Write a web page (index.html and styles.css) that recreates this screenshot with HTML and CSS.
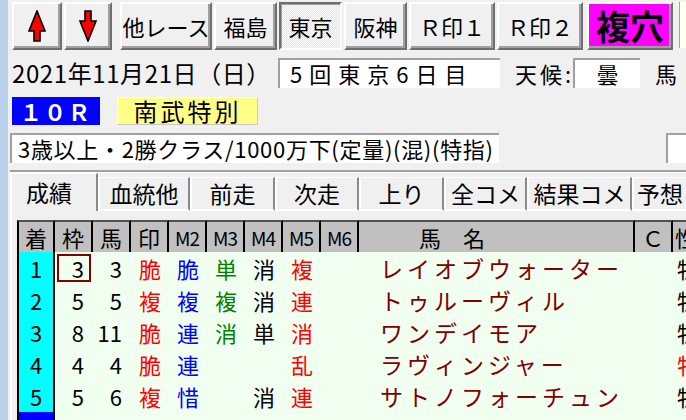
FILE: index.html
```html
<!DOCTYPE html>
<html lang="ja">
<head>
    <meta charset="UTF-8">
    <link rel="stylesheet" href="styles.css">
</head>
<body>
<div class="frame">
    <div class="frame-edge"></div>
    <div class="window">
        <div class="toolbar">
            <button class="btn btn-up">
                <svg width="18" height="32" viewBox="0 0 18 32"><polygon points="9,1 17,21 12,21 12,31 6,31 6,21 1,21" fill="#f00" stroke="#000" stroke-width="1.6"/></svg>
            </button>
            <button class="btn btn-down">
                <svg width="18" height="32" viewBox="0 0 18 32"><polygon points="6,1 12,1 12,11 17,11 9,31 1,11 6,11" fill="#f00" stroke="#000" stroke-width="1.6"/></svg>
            </button>
            <button class="btn btn-other">他レース</button>
            <button class="btn btn-course">福島</button>
            <button class="btn btn-course pressed">東京</button>
            <button class="btn btn-course">阪神</button>
            <button class="btn btn-mark">Ｒ印１</button>
            <button class="btn btn-mark">Ｒ印２</button>
            <button class="btn btn-fukuana">複穴</button>
            <div class="memo"></div>
        </div>

        <div class="race-date">
            <span class="date">2021年11月21日（日）</span>
            <span class="field field-kaisai">5回東京6日目</span>
            <span class="label label-weather">天候:</span>
            <span class="field field-weather">曇</span>
            <span class="label label-baba">馬</span>
        </div>

        <div class="race-title">
            <span class="race-no">１０Ｒ</span>
            <span class="race-name">南武特別</span>
        </div>

        <div class="race-cond">
            <span class="field field-cond">3歳以上・2勝クラス/1000万下(定量)(混)(特指)</span>
            <span class="field field-side"></span>
        </div>

        <div class="rule"></div>

        <div class="tabs">
            <div class="tab active tab-seiseki">成績</div>
            <div class="tab tab-kettou">血統他</div>
            <div class="tab tab-zenso">前走</div>
            <div class="tab tab-jiso">次走</div>
            <div class="tab tab-agari">上り</div>
            <div class="tab tab-zencome">全コメ</div>
            <div class="tab tab-kekka">結果コメ</div>
            <div class="tab tab-yoso">予想</div>
        </div>

        <div class="panel">
            <table class="grid">
                <thead>
                <tr>
                    <th class="c-rank">着</th>
                    <th class="c-num">枠</th>
                    <th class="c-num">馬</th>
                    <th class="c-num">印</th>
                    <th class="c-num m">M2</th>
                    <th class="c-num m">M3</th>
                    <th class="c-num m">M4</th>
                    <th class="c-num m">M5</th>
                    <th class="c-num m">M6</th>
                    <th class="c-name">馬　名</th>
                    <th class="c-num">Ｃ</th>
                    <th class="c-sex">性</th>
                </tr>
                </thead>
                <tbody>
                <tr>
                    <td class="rank">1</td>
                    <td class="num focus">3</td>
                    <td class="num">3</td>
                    <td class="mk red">脆</td>
                    <td class="mk blue">脆</td>
                    <td class="mk green">単</td>
                    <td class="mk">消</td>
                    <td class="mk red">複</td>
                    <td class="mk"></td>
                    <td class="name">レイオブウォーター</td>
                    <td class="mk"></td>
                    <td class="sex">牡</td>
                </tr>
                <tr>
                    <td class="rank">2</td>
                    <td class="num">5</td>
                    <td class="num">5</td>
                    <td class="mk red">複</td>
                    <td class="mk blue">複</td>
                    <td class="mk green">複</td>
                    <td class="mk">消</td>
                    <td class="mk red">連</td>
                    <td class="mk"></td>
                    <td class="name">トゥルーヴィル</td>
                    <td class="mk"></td>
                    <td class="sex">牡</td>
                </tr>
                <tr>
                    <td class="rank">3</td>
                    <td class="num">8</td>
                    <td class="num">11</td>
                    <td class="mk red">脆</td>
                    <td class="mk blue">連</td>
                    <td class="mk green">消</td>
                    <td class="mk">単</td>
                    <td class="mk red">消</td>
                    <td class="mk"></td>
                    <td class="name">ワンデイモア</td>
                    <td class="mk"></td>
                    <td class="sex">牡</td>
                </tr>
                <tr>
                    <td class="rank">4</td>
                    <td class="num">4</td>
                    <td class="num">4</td>
                    <td class="mk red">脆</td>
                    <td class="mk blue">連</td>
                    <td class="mk"></td>
                    <td class="mk"></td>
                    <td class="mk red">乱</td>
                    <td class="mk"></td>
                    <td class="name">ラヴィンジャー</td>
                    <td class="mk"></td>
                    <td class="sex red">牝</td>
                </tr>
                <tr>
                    <td class="rank">5</td>
                    <td class="num">5</td>
                    <td class="num">6</td>
                    <td class="mk red">複</td>
                    <td class="mk blue">惜</td>
                    <td class="mk"></td>
                    <td class="mk">消</td>
                    <td class="mk red">連</td>
                    <td class="mk"></td>
                    <td class="name">サトノフォーチュン</td>
                    <td class="mk"></td>
                    <td class="sex">牡</td>
                </tr>
                <tr>
                    <td class="rank rank-sel"></td>
                    <td class="num"></td>
                    <td class="num"></td>
                    <td class="mk"></td>
                    <td class="mk"></td>
                    <td class="mk"></td>
                    <td class="mk"></td>
                    <td class="mk"></td>
                    <td class="mk"></td>
                    <td class="name"></td>
                    <td class="mk"></td>
                    <td class="sex"></td>
                </tr>
                </tbody>
            </table>
        </div>
    </div>
</div>
</body>
</html>
```

FILE: styles.css
```css
body {
    margin: 0;
    background: #f0f0f0;
    font-family: "Noto Sans CJK JP", sans-serif;
    color: #000;
    overflow: hidden;
}

.frame {
    display: flex;
    height: 420px;
}

.frame-edge {
    flex: none;
    width: 8px;
    background: #b9d1ea;
}

.window {
    flex: 1;
    min-width: 0;
    overflow: hidden;
}

/* ツールバー */
.toolbar {
    display: flex;
    align-items: flex-start;
    gap: 2px;
    height: 48px;
    padding: 2px 0 0 4px;
}

.btn {
    flex: none;
    box-sizing: border-box;
    height: 48px;
    padding: 0;
    display: flex;
    align-items: center;
    justify-content: center;
    background: #f0f0f0;
    border: 2px solid;
    border-color: #fff #6e6e6e #6e6e6e #fff;
    box-shadow: inset -2px -2px 0 #a0a0a0;
    font-family: inherit;
    font-size: 22px;
    line-height: 1;
    color: #000;
}

.btn-up { width: 50px; }
.btn-down { width: 48px; }
.btn-other { width: 92px; margin-left: 6px; }
.btn-course { width: 63px; }
.btn-mark { width: 86px; }

.btn.pressed {
    border-color: #6e6e6e #fff #fff #6e6e6e;
    box-shadow: inset 1px 1px 0 #a0a0a0;
    background: repeating-conic-gradient(#fff 0 25%, #e4e4e4 0 50%) 0 0 / 2px 2px;
}

.btn-fukuana {
    width: 86px;
    margin-left: 2px;
    background: #ff00ff;
    font-size: 34px;
    font-weight: bold;
}

.memo {
    flex: none;
    width: 30px;
    height: 46px;
    margin-left: 4px;
    background: #fffff0;
    border-left: 1px solid #a0a0a0;
}

/* 開催情報 */
.race-date {
    display: flex;
    align-items: center;
    height: 30px;
    margin-top: 8px;
    padding-left: 4px;
    white-space: nowrap;
}

.date {
    width: 266px;
    font-size: 24px;
    line-height: 30px;
    letter-spacing: 0.6px;
}

.field {
    box-sizing: border-box;
    height: 30px;
    background: #fff;
    border-top: 2px solid #a0a0a0;
    border-left: 2px solid #a0a0a0;
    font-size: 22px;
    line-height: 27px;
    white-space: nowrap;
}

.field-kaisai {
    width: 222px;
    padding-left: 10px;
    letter-spacing: 7px;
}

.label {
    font-size: 22px;
    line-height: 30px;
}

.label-weather {
    width: 58px;
    margin-left: 15px;
    letter-spacing: 3px;
}

.field-weather {
    width: 67px;
    text-align: center;
}

.label-baba {
    margin-left: 15px;
}

.race-title {
    display: flex;
    height: 28px;
    margin-top: 9px;
    padding-left: 4px;
}

.race-no {
    width: 88px;
    background: #0000ff;
    color: #fff;
    font-size: 22px;
    font-weight: bold;
    line-height: 28px;
    letter-spacing: 2px;
    text-align: center;
}

.race-name {
    box-sizing: border-box;
    width: 141px;
    margin-left: 17px;
    background: #ffff88;
    border: 1px solid #fff;
    border-right-color: #c8c8c8;
    border-bottom-color: #c8c8c8;
    font-size: 24px;
    line-height: 26px;
    letter-spacing: 3px;
    text-align: center;
}

.race-cond {
    display: flex;
    margin-top: 8px;
    padding-left: 2px;
}

.field-cond {
    width: 498px;
    padding-left: 6px;
    font-size: 22px;
    letter-spacing: 0.7px;
}

.field-side {
    width: 20px;
    margin-left: 167px;
}

.rule {
    height: 2px;
    margin: 7px 0 0 2px;
    background: #a0a0a0;
    border-bottom: 1px solid #fff;
}

/* タブ */
.tabs {
    display: flex;
    align-items: flex-end;
    height: 38px;
    padding-left: 2px;
    white-space: nowrap;
}

.tab {
    flex: none;
    box-sizing: border-box;
    height: 34px;
    border-left: 2px solid #fff;
    border-top: 1px solid #fff;
    border-right: 2px solid #8a8a8a;
    border-bottom: 2px solid #fff;
    font-size: 23px;
    line-height: 30px;
    text-align: center;
}

.tab.active {
    height: 38px;
    border-bottom: none;
    line-height: 36px;
}

.tab-seiseki { width: 88px; padding-right: 10px; }
.tab-kettou { width: 92px; }
.tab-zenso { width: 85px; }
.tab-jiso { width: 84px; }
.tab-agari { width: 85px; }
.tab-zencome { width: 83px; }
.tab-kekka { width: 105px; }
.tab-yoso { width: 70px; padding-right: 14px; }

.panel {
    margin-left: 2px;
    padding: 9px 0 0 5px;
    border-left: 2px solid #fff;
}

/* 成績表 */
.grid {
    border-collapse: separate;
    border-spacing: 0;
    table-layout: fixed;
    width: 716px;
    font-size: 22px;
}

.grid th,
.grid td {
    box-sizing: border-box;
    height: 32px;
    padding: 0;
    line-height: 1;
    white-space: nowrap;
}

.grid th {
    background: #c0c0c0;
    border-top: 2px solid #505050;
    border-right: 2px solid #000;
    font-weight: normal;
    font-size: 22px;
    text-align: center;
}

.grid th.m {
    font-size: 19px;
    letter-spacing: -1px;
}

.c-rank { width: 38px; border-left: 2px solid #000; }
.c-num { width: 38px; }
.c-name { width: 276px; }
.grid th.c-name { text-align: left; padding-left: 60px; }
.c-sex { width: 60px; }
.grid th.c-sex { text-align: left; padding-left: 2px; }

.grid td {
    background: #f0fff0;
}

.grid td.rank {
    background: #00ffff;
    border-left: 2px solid #000;
    border-right: 2px solid #000;
    text-align: center;
}

.grid td.rank-sel {
    background: #0000ff;
}

.num {
    text-align: right;
    padding-right: 9px !important;
}

.focus {
    box-shadow: inset 0 0 0 2px #f0fff0, inset 0 0 0 4px #800000;
}

.mk {
    text-align: center;
}

.name {
    padding-left: 21px !important;
    color: #800000;
    font-size: 23px;
    letter-spacing: 4px;
}

.sex {
    padding-left: 4px !important;
}

.red { color: #ff0000; }
.blue { color: #0000ff; }
.green { color: #008000; }
```
